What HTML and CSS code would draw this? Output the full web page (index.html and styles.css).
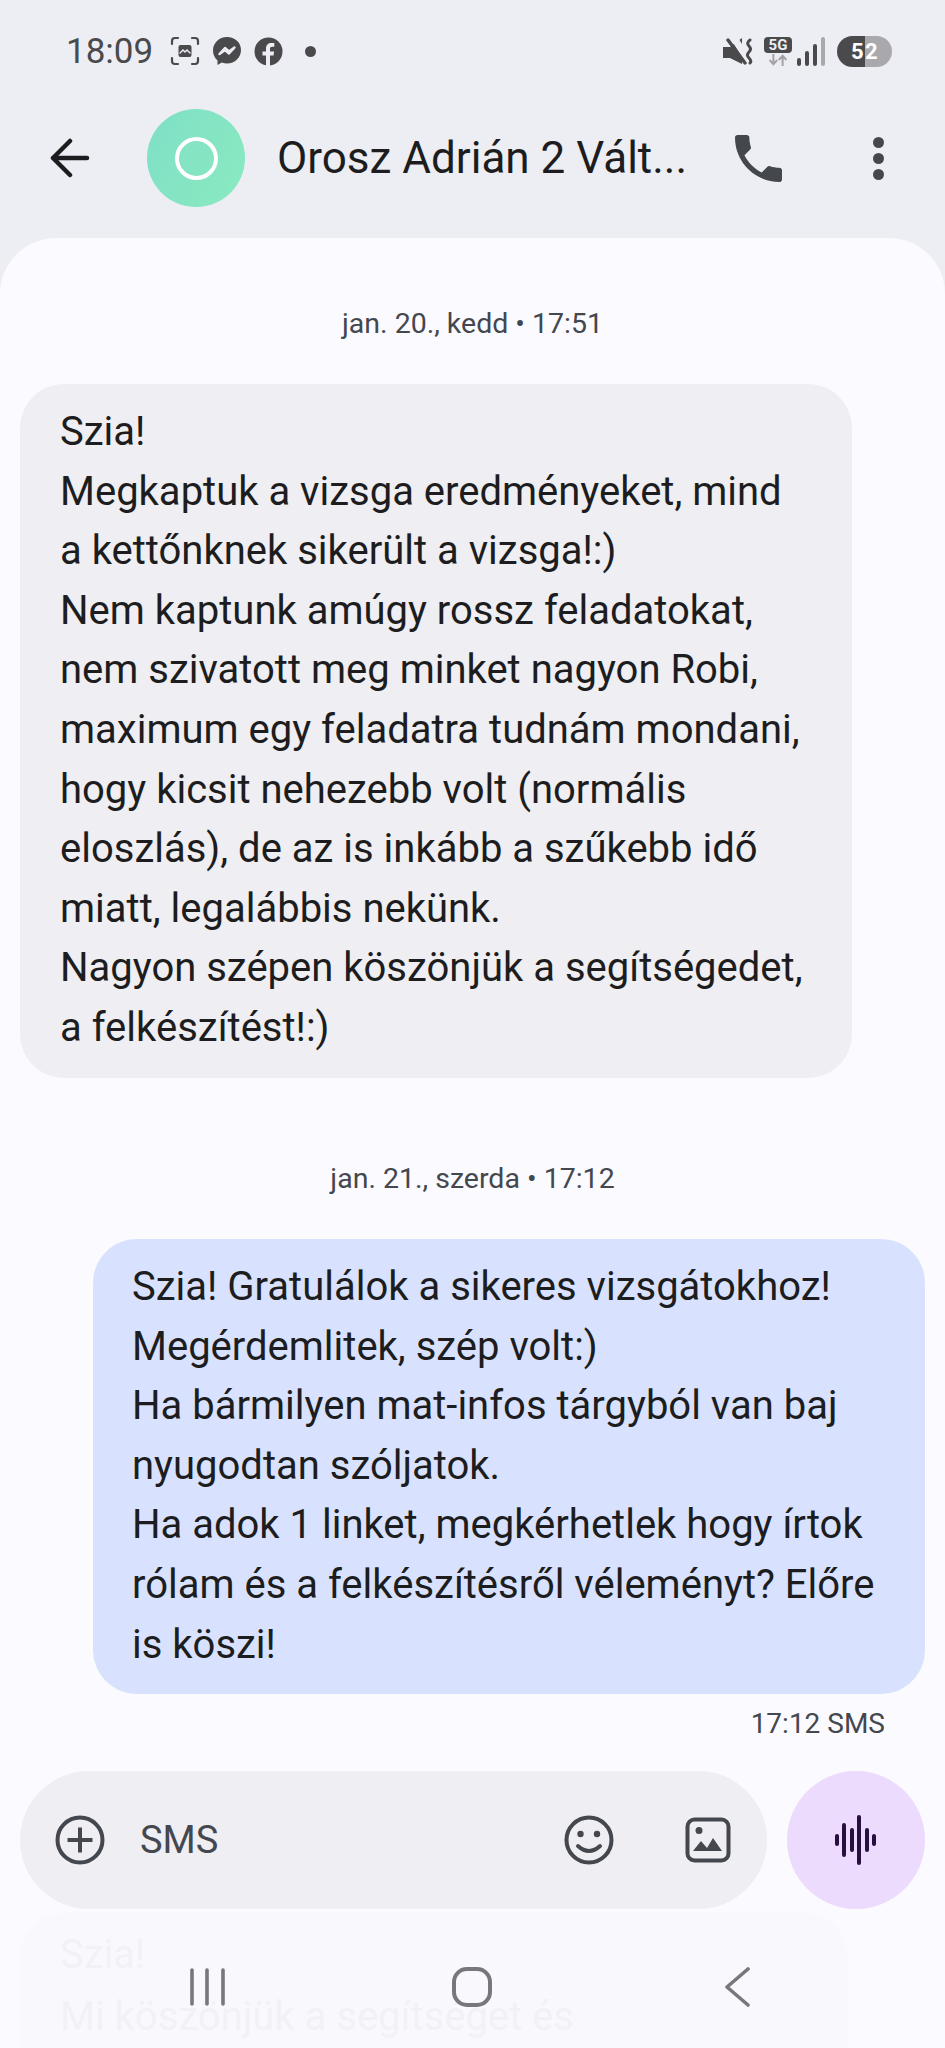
FILE: index.html
```html
<!DOCTYPE html>
<html lang="hu">
<head>
  <meta charset="UTF-8" />
  <meta name="viewport" content="width=device-width, initial-scale=1.0" />
  <title>Orosz Adrián 2</title>
  <link rel="stylesheet" href="styles.css">
</head>
<body>
  <div class="phone">
    <!-- Status bar -->
    <div class="status">
      <span class="clock">18:09</span>
      <svg class="st-ic" width="30" height="30" viewBox="0 0 30 30" fill="none" stroke="#4a4a4c" stroke-width="2.2" stroke-linecap="round"><path d="M2 8V5q0-3 3-3h3M22 2h3q3 0 3 3v3M28 22v3q0 3-3 3h-3M8 28H5q-3 0-3-3v-3"/><rect x="8.5" y="9" width="13" height="12" rx="2" fill="#4a4a4c" stroke="none"/><path d="M10 17l3-3 2 2 2-2 3 3" stroke="#edeef3" stroke-width="1.4"/></svg>
      <svg class="st-ic" width="30" height="30" viewBox="0 0 30 30"><path fill="#4a4a4c" d="M15 1C7 1 1 7 1 14.5c0 4 1.700 7.500 4.500 10v4.500l4.300-2.400c1.600.6 3.400.9 5.200.9 8 0 14-6 14-13.500S23 1 15 1z"/><path fill="none" stroke="#edeef3" stroke-width="2.4" stroke-linejoin="round" d="M7.500 18l5.500-6 4 3.500 5.500-4-5.500 6-4-3.500z"/></svg>
      <svg class="st-ic" width="29" height="29" viewBox="0 0 29 29"><circle cx="14.5" cy="14.5" r="14" fill="#4a4a4c"/><path fill="#edeef3" d="M12 29V18.500H8.500v-4H12V11.500c0-3.700 2.200-5.600 5.400-5.600 1.300 0 2.400.1 2.900.2v3.700h-2c-1.700 0-2.300.8-2.300 2.200v2.500h4.100l-.6 4H16V29z"/></svg>
      <span class="dot"></span>
      <span class="spacer"></span>
      <svg width="30" height="27" viewBox="0 0 30 27"><path fill="#4a4a4c" d="M0 9h7L19 0v26L7 20H0z"/><path stroke="#edeef3" stroke-width="7" d="M10 -2L26 24"/><path stroke="#4a4a4c" stroke-width="3.4" stroke-linecap="round" d="M5 2l17 23"/><path fill="none" stroke="#4a4a4c" stroke-width="3" stroke-linecap="round" d="M27 2q-4 3-1 6t0 6 0 6 1 5"/></svg>
      <span class="net">
        <span class="net-tag">5G</span>
        <svg width="20" height="12" viewBox="0 0 26 14" preserveAspectRatio="none" fill="none" stroke="#a3a3a7" stroke-width="2.6"><path d="M7 0v12M2 7l5 5 5-5M19 14V2M14 7l5-5 5 5"/></svg>
      </span>
      <span class="bars">
        <i class="bar b1"></i><i class="bar b2"></i><i class="bar b3"></i><i class="bar b4"></i>
      </span>
      <span class="batt"><span class="batt-fill">5</span><span class="batt-rest">2</span></span>
    </div>

    <!-- Title bar -->
    <div class="topbar">
      <svg class="back" width="40" height="40" viewBox="0 0 40 40" fill="none" stroke="#1d1d20" stroke-width="4.5" stroke-linecap="round" stroke-linejoin="round"><path d="M37 20H3M20 3L3 20l17 17"/></svg>
      <div class="avatar"><span class="avatar-ring"></span></div>
      <div class="title">Orosz Adrián 2 Vált...</div>
      <svg class="call" width="47" height="47" viewBox="3 3 18 18"><path fill="#44474e" d="M6.620 10.790c1.440 2.830 3.760 5.140 6.590 6.590l2.200-2.200c.27-.27.67-.36 1.020-.24 1.120.37 2.330.57 3.570.57.55 0 1 .45 1 1V20c0 .55-.45 1-1 1-9.390 0-17-7.610-17-17 0-.55.45-1 1-1h3.500c.55 0 1 .45 1 1 0 1.250.2 2.450.57 3.570.11.35.03.74-.25 1.020l-2.200 2.200z"/></svg>
      <div class="more"><i></i><i></i><i></i></div>
    </div>

    <!-- Messages -->
    <div class="sheet">
      <div class="stamp stamp-first">jan. 20., kedd • 17:51</div>
      <div class="bubble in">Szia!
Megkaptuk a vizsga eredményeket, mind
a kettőnknek sikerült a vizsga!:)
Nem kaptunk amúgy rossz feladatokat,
nem szivatott meg minket nagyon Robi,
maximum egy feladatra tudnám mondani,
hogy kicsit nehezebb volt (normális
eloszlás), de az is inkább a szűkebb idő
miatt, legalábbis nekünk.
Nagyon szépen köszönjük a segítségedet,
a felkészítést!:)</div>
      <div class="stamp stamp-second">jan. 21., szerda • 17:12</div>
      <div class="bubble out">Szia! Gratulálok a sikeres vizsgátokhoz!
Megérdemlitek, szép volt:)
Ha bármilyen mat-infos tárgyból van baj
nyugodtan szóljatok.
Ha adok 1 linket, megkérhetlek hogy írtok
rólam és a felkészítésről véleményt? Előre
is köszi!</div>
      <div class="sent-info">17:12 SMS</div>

      <!-- Composer -->
      <div class="composer">
        <div class="input">
          <svg width="50" height="50" viewBox="0 0 50 50" fill="none" stroke="#44474e" stroke-width="4"><circle cx="25" cy="25" r="22.5"/><path d="M25 12.500v25M12.500 25h25"/></svg>
          <span class="input-text">SMS</span>
          <svg class="emoji" width="50" height="50" viewBox="0 0 50 50" fill="none" stroke="#44474e" stroke-width="4"><circle cx="25" cy="25" r="22.5"/><circle cx="16.500" cy="19" r="3.2" fill="#44474e" stroke="none"/><circle cx="33" cy="19" r="3.2" fill="#44474e" stroke="none"/><path d="M14 31q11 10 22 0" stroke-linecap="round"/></svg>
          <svg class="gallery" width="46" height="46" viewBox="0 0 46 46" fill="none"><rect x="2.500" y="2.500" width="41" height="41" rx="7" stroke="#44474e" stroke-width="4"/><circle cx="14" cy="13.500" r="3.500" fill="#44474e"/><path fill="#44474e" d="M8 34l8-10 6 7 6-10 9 13z"/></svg>
        </div>
        <div class="voice">
          <svg width="44" height="50" viewBox="0 0 44 50" stroke="#25103f" stroke-width="4" stroke-linecap="round"><path d="M3 21v8M10 10v30M18 15v20M25 2v46M33 15v20M40 21v8"/></svg>
        </div>
      </div>

      <!-- Message showing through the nav bar -->
      <div class="ghost">Szia!
Mi köszönjük a segítséget és</div>
    </div>

    <!-- Nav bar -->
    <div class="navbar">
      <svg width="36" height="38" viewBox="0 0 36 38" stroke="#77787c" stroke-width="3.6" stroke-linecap="round"><path d="M2 2v34M17 2v34M33 2v34"/></svg>
      <svg class="nav-home" width="40" height="40" viewBox="0 0 40 40" fill="none" stroke="#77787c" stroke-width="4"><rect x="2" y="2" width="36" height="36" rx="13"/></svg>
      <svg class="nav-back" width="26" height="40" viewBox="0 0 26 40" fill="none" stroke="#77787c" stroke-width="3.6" stroke-linecap="round" stroke-linejoin="round"><path d="M24 2L3 20l21 18"/></svg>
    </div>
  </div>
</body>
</html>
```

FILE: styles.css
```css
html, body {
    margin: 0;
    padding: 0;
}
body {
    background: #fafaff;
    font-family: Roboto, "Noto Sans", Arial, sans-serif;
}
.phone {
    position: relative;
    width: 945px;
    height: 2048px;
    overflow: hidden;
    background: #edeef3;
}

/* status bar */
.status {
    height: 40px;
    padding: 31px 53px 0 66px;
    display: flex;
    align-items: center;
    color: #4a4a4c;
}
.clock {
    font-size: 35px;
    margin-right: 17px;
}
.st-ic {
    margin-right: 12px;
}
.dot {
    width: 11px;
    height: 11px;
    margin-left: 10px;
    border-radius: 50%;
    background: #4a4a4c;
}
.spacer {
    flex: 1;
}
.net {
    display: flex;
    flex-direction: column;
    align-items: center;
    gap: 1px;
    margin-left: 11px;
}
.net-tag {
    width: 28px;
    text-align: center;
    background: #4a4a4c;
    color: #edeef3;
    font-size: 15px;
    font-weight: 700;
    line-height: 16px;
    border-radius: 4px;
}
.bars {
    display: flex;
    align-items: flex-end;
    gap: 4px;
    height: 29px;
    margin: 0 12px 0 5px;
}
.bar {
    width: 4px;
    border-radius: 2px;
    background: #4a4a4c;
}
.b1 { height: 8px; }
.b2 { height: 15px; }
.b3 { height: 22px; }
.b4 { height: 29px; background: #a9a9ad; }
.batt {
    display: flex;
    width: 55px;
    height: 31px;
    border-radius: 16px;
    overflow: hidden;
    font-size: 22px;
    font-weight: 700;
    line-height: 31px;
    color: #fff;
}
.batt-fill {
    width: 28px;
    padding-left: 14px;
    box-sizing: border-box;
    background: #4a4a4c;
}
.batt-rest {
    flex: 1;
    background: #a9a9ad;
}

/* title bar */
.topbar {
    height: 167px;
    padding: 7px 0 0 50px;
    display: flex;
    align-items: center;
    box-sizing: border-box;
}
.back {
    flex: none;
}
.avatar {
    flex: none;
    width: 98px;
    height: 98px;
    margin-left: 57px;
    border-radius: 50%;
    background: linear-gradient(120deg, #7fdfc6, #8aeac0);
    display: flex;
    align-items: center;
    justify-content: center;
}
.avatar-ring {
    width: 35px;
    height: 35px;
    border: 4.5px solid #fff;
    border-radius: 50%;
}
.title {
    flex: none;
    width: 458px;
    margin-left: 32px;
    font-size: 44px;
    color: #1d1d20;
    white-space: nowrap;
}
.call {
    flex: none;
}
.more {
    margin-left: 91px;
    display: flex;
    flex-direction: column;
    gap: 5px;
}
.more i {
    display: block;
    width: 11px;
    height: 11px;
    border-radius: 50%;
    background: #44474e;
}

/* message list */
.sheet {
    position: relative;
    height: 1810px;
    border-radius: 56px 56px 0 0;
    background: #fafaff;
    display: flex;
    flex-direction: column;
}
.stamp {
    text-align: center;
    font-size: 28.5px;
    line-height: 36px;
    color: #44474e;
}
.stamp-first {
    margin-top: 68px;
}
.stamp-second {
    margin-top: 83px;
}
.bubble {
    box-sizing: border-box;
    font-size: 40px;
    line-height: 59.6px;
    color: #1d1d20;
    white-space: pre-line;
    border-radius: 44px;
}
.in {
    width: 832px;
    height: 694px;
    margin: 42px 0 0 20px;
    padding: 18px 0 0 40px;
    background: #eeeef3;
}
.out {
    width: 832px;
    height: 455px;
    margin: 42px 0 0 93px;
    padding: 18px 0 0 39px;
    background: #d8e2fe;
}
.sent-info {
    margin-top: 12px;
    padding-right: 60px;
    text-align: right;
    font-size: 28px;
    line-height: 36px;
    color: #44474e;
}

/* composer */
.composer {
    margin: 29px 20px 0;
    display: flex;
    justify-content: space-between;
    position: relative;
    z-index: 1;
}
.input {
    width: 747px;
    height: 138px;
    box-sizing: border-box;
    padding: 0 36px 0 35px;
    border-radius: 69px;
    background: #eeeef3;
    display: flex;
    align-items: center;
}
.input-text {
    flex: 1;
    margin-left: 35px;
    font-size: 38px;
    color: #44474e;
}
.emoji {
    margin-right: 71px;
}
.voice {
    width: 138px;
    height: 138px;
    border-radius: 50%;
    background: #eddbfd;
    display: flex;
    align-items: center;
    justify-content: center;
}
.ghost {
    position: absolute;
    left: 20px;
    width: 828px;
    bottom: 0;
    height: 135px;
    padding: 11px 0 0 40px;
    box-sizing: border-box;
    border-radius: 44px 44px 0 0;
    background: #f9f9fd;
    font-size: 40px;
    line-height: 62px;
    color: #f2f2f6;
    white-space: pre-line;
}

/* nav bar */
.navbar {
    position: absolute;
    left: 0;
    right: 0;
    bottom: 0;
    height: 122px;
    display: flex;
    align-items: center;
    padding-left: 190px;
}
.nav-home {
    margin-left: 226px;
}
.nav-back {
    margin-left: 232px;
}
```
